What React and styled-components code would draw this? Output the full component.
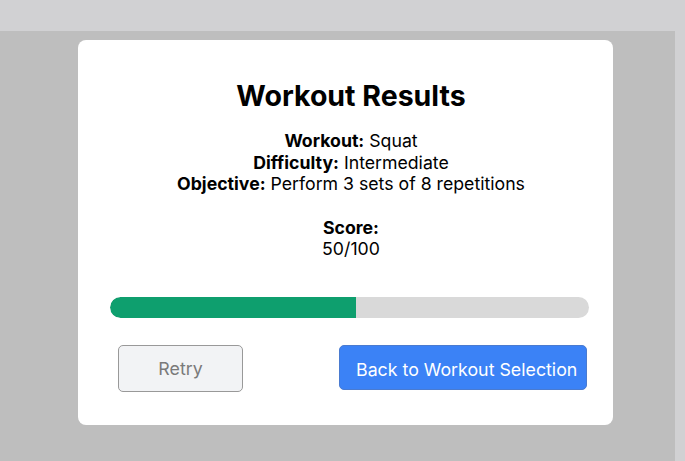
import React from "react";
import styled, { createGlobalStyle } from "styled-components";

const Global = createGlobalStyle`
  html, body { margin: 0; padding: 0; }
  body {
    background: #d1d1d3;
    font-family: Inter, "Noto Sans", sans-serif;
    width: 685px;
    height: 461px;
    overflow: hidden;
  }
`;

const Page = styled.div`
  display: flex;
  flex-direction: column;
  height: 461px;
`;

const TopBar = styled.div`
  height: 31px;
  flex: none;
`;

const Overlay = styled.div`
  flex: 1;
  width: 675px;
  background: #bebebe;
  padding: 9px 0 0 78px;
  box-sizing: border-box;
`;

const Modal = styled.div`
  width: 535px;
  height: 385px;
  box-sizing: border-box;
  background: #ffffff;
  border-radius: 8px;
  padding: 39px 24px 33px 32px;
  display: flex;
  flex-direction: column;
  align-items: stretch;
  text-align: center;
  color: #000;
`;

const Title = styled.h2`
  margin: 0;
  font-size: 28.5px;
  line-height: 33px;
  font-weight: 700;
  padding-left: 3px;
`;

const Details = styled.div`
  margin-top: 18px;
  font-size: 17.7px;
  line-height: 21.5px;
  padding-left: 3px;
`;

const Line = styled.div``;

const Label = styled.strong`
  font-weight: 700;
`;

const Score = styled.div`
  margin-top: 22px;
  font-size: 17.7px;
  line-height: 21.5px;
  padding-left: 3px;
`;

const Track = styled.div`
  margin-top: 37.5px;
  height: 21px;
  flex: none;
  border-radius: 11px;
  background: #d9d9d9;
  overflow: hidden;
  display: flex;
`;

const Fill = styled.div`
  background: #0e9f6e;
  height: 100%;
  border-radius: 11px 0 0 11px;
`;

const Buttons = styled.div`
  margin-top: 27px;
  display: flex;
  justify-content: space-between;
  align-items: flex-start;
  padding: 0 2px 0 8px;
`;

const Button = styled.button`
  font-family: Inter, "Noto Sans", sans-serif;
  font-size: 17.8px;
  box-sizing: border-box;
  border-radius: 5px;
  cursor: pointer;
  padding: 0;
  height: ${(p) => (p.$primary ? "45px" : "47px")};
  width: ${(p) => (p.$primary ? "248px" : "125px")};
  background: ${(p) => (p.$primary ? "#3b82f6" : "#f2f3f5")};
  color: ${(p) => (p.$primary ? "#ffffff" : "#7a7a7a")};
  border: 1px solid ${(p) => (p.$primary ? "#4a7bd0" : "#999999")};
  text-align: ${(p) => (p.$primary ? "left" : "center")};
  padding-left: ${(p) => (p.$primary ? "16px" : "0")};
  padding-top: ${(p) => (p.$primary ? "4px" : "0")};
  white-space: nowrap;
  overflow: hidden;
`;

export default function App() {
  const score = 50;
  return (
    <>
      <Global />
      <Page>
        <TopBar />
        <Overlay>
          <Modal>
            <Title>Workout Results</Title>
            <Details>
              <Line><Label>Workout:</Label> Squat</Line>
              <Line><Label>Difficulty:</Label> Intermediate</Line>
              <Line><Label>Objective:</Label> Perform 3 sets of 8 repetitions</Line>
            </Details>
            <Score>
              <Line><Label>Score:</Label></Line>
              <Line>{score}/100</Line>
            </Score>
            <Track>
              <Fill style={{ width: `${score * 1.028}%` }} />
            </Track>
            <Buttons>
              <Button>Retry</Button>
              <Button $primary>Back to Workout Selection</Button>
            </Buttons>
          </Modal>
        </Overlay>
      </Page>
    </>
  );
}
